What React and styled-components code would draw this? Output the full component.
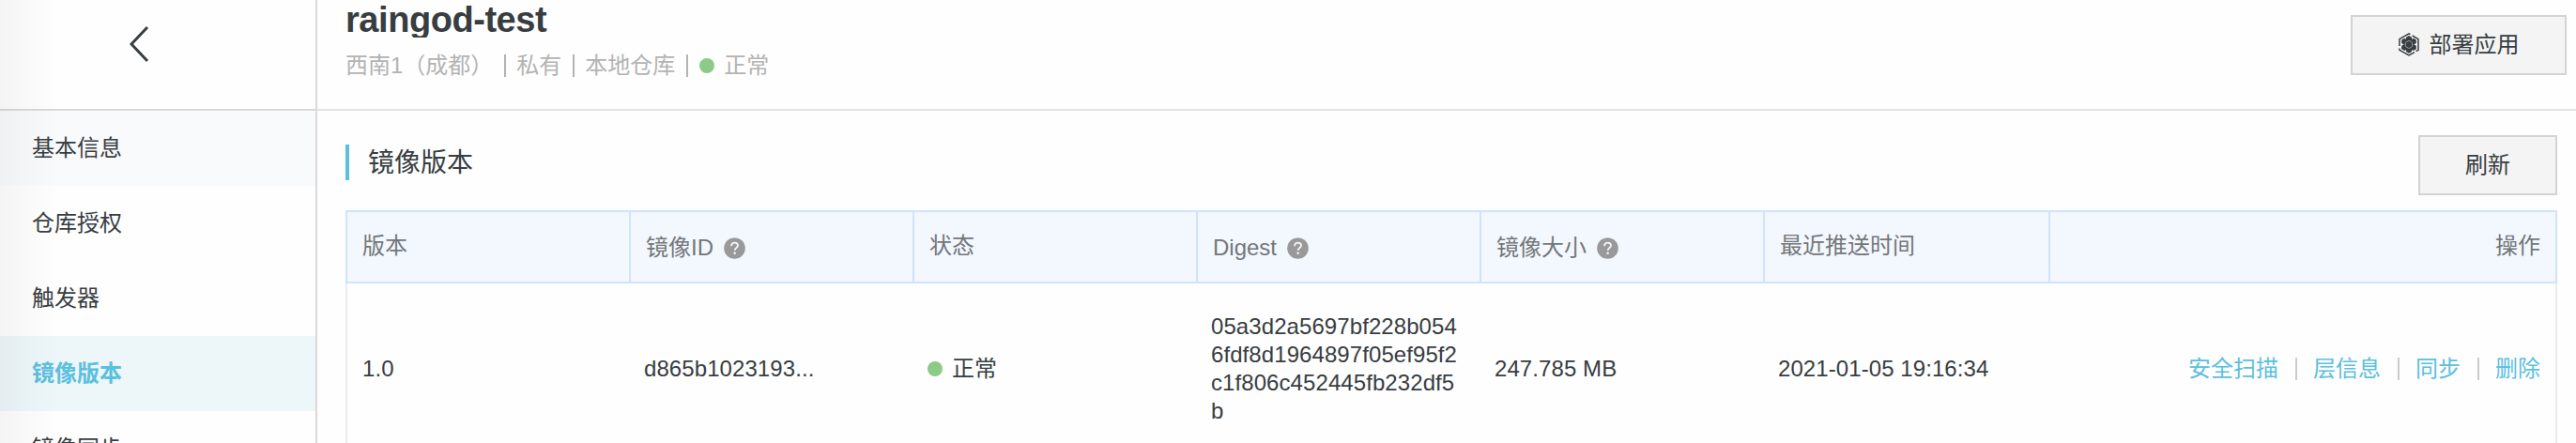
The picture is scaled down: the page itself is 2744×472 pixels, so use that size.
import React from "react";
import styled, { createGlobalStyle } from "styled-components";

const Global = createGlobalStyle`
  * { box-sizing: border-box; }
  body {
    margin: 0;
    background: #fefefe;
    color: #373d41;
    font-family: "Liberation Sans", "Noto Sans CJK SC", sans-serif;
    font-size: 24px;
    line-height: 30px;
    overflow: hidden;
  }
`;

const Page = styled.div`
  display: flex;
  height: 472px;
  overflow: hidden;
`;

const Sidebar = styled.nav`
  position: relative;
  flex: 0 0 338px;
  height: 472px;
  overflow: hidden;
  border-right: 2px solid #d9d9d9;
  &::after {
    content: "";
    position: absolute;
    inset: 0 auto 0 0;
    width: 64px;
    pointer-events: none;
    background: linear-gradient(90deg, rgba(0, 0, 0, 0.04), rgba(0, 0, 0, 0.02) 45%, rgba(0, 0, 0, 0));
  }
`;

const BackBar = styled.div`
  height: 118px;
  padding: 27px 0 0 138px;
  border-bottom: 2px solid #d9d9d9;
  svg { display: block; }
`;

const NavItem = styled.a`
  display: flex;
  align-items: center;
  height: 80px;
  padding: 0 34px;
  background: ${(p) => (p.$active ? "#edf6f9" : p.$shaded ? "#f9fafc" : "transparent")};
  color: ${(p) => (p.$active ? "#5bc0de" : "#373d41")};
  font-weight: ${(p) => (p.$active ? 700 : 400)};
`;

const Main = styled.main`
  flex: 1;
  min-width: 0;
`;

const Header = styled.header`
  display: flex;
  justify-content: space-between;
  height: 118px;
  padding: 0 10px 0 30px;
  border-bottom: 2px solid #e3e3e3;
`;

const Title = styled.h1`
  height: 40px;
  margin: 0;
  overflow: hidden;
  font-size: 38px;
  line-height: 42px;
  letter-spacing: -0.45px;
  font-weight: 700;
`;

const Meta = styled.div`
  display: flex;
  align-items: center;
  height: 30px;
  margin-top: 15px;
  color: #b3b3b3;
  white-space: pre;
`;

const Dot = styled.i`
  flex: none;
  width: 16px;
  height: 16px;
  margin-right: ${(p) => p.$gap}px;
  border-radius: 50%;
  background: #8ccb87;
`;

const Bar = styled.i`
  flex: none;
  width: 2px;
  height: 24px;
  margin: ${(p) => p.$margin};
  background: ${(p) => p.$color};
`;

const Button = styled.button`
  display: flex;
  align-items: center;
  justify-content: center;
  gap: 11px;
  width: ${(p) => p.$width}px;
  height: 64px;
  margin: ${(p) => p.$top}px 0 0;
  padding: 0 0 1px;
  border: 2px solid #d3d3d3;
  background: #f4f4f4;
  color: #373d41;
  font: inherit;
`;

const Section = styled.section`
  padding: 0 20px 0 30px;
`;

const SectionHead = styled.div`
  display: flex;
  justify-content: space-between;
  height: 106px;
`;

const SectionTitle = styled.h2`
  height: 38px;
  margin: 36px 0 0;
  padding-left: 20px;
  border-left: 4px solid #5bc0de;
  font-size: 28px;
  line-height: 40px;
  font-weight: 400;
`;

const columns = "302px 302px 302px 302px 302px 304px 1fr";

const TableHead = styled.div`
  display: grid;
  grid-template-columns: ${columns};
  height: 78px;
  border: solid #d0e3fc;
  border-width: 2px 2px 2px 0;
  background: #f3f7fe;
  color: #73777a;
`;

const HeadCell = styled.div`
  display: flex;
  align-items: center;
  justify-content: ${(p) => (p.$end ? "flex-end" : "flex-start")};
  gap: 11px;
  padding: ${(p) => (p.$help ? "2px" : "0")} 16px ${(p) => (p.$help ? "0" : "2px")};
  border-left: 2px solid #d0e3fc;
`;

const TableRow = styled.div`
  display: grid;
  grid-template-columns: ${columns};
  height: 184px;
  border: solid #ebebeb;
  border-width: 0 2px;
`;

const Cell = styled.div`
  display: flex;
  align-items: center;
  justify-content: ${(p) => (p.$end ? "flex-end" : "flex-start")};
  padding: 0 ${(p) => (p.$end ? 16 : 20)}px 3px 14px;
  letter-spacing: ${(p) => (p.$end ? 0 : 0.08)}px;
  &:first-child { padding-left: 16px; }
`;

const Digest = styled.span`
  width: 265px;
  word-break: break-all;
`;

const Link = styled.a`
  color: #5bc0de;
`;

const HelpIcon = () => (
  <svg width="23" height="23" viewBox="0 0 23 23">
    <circle cx="11.5" cy="11.5" r="11.3" fill="#999" />
    <path d="M8.1 9.2C8.1 6.9 9.6 5.6 11.6 5.6s3.4 1.2 3.4 3c0 2.5-3.3 2.5-3.3 5.1" fill="none" stroke="#f3f7fe" strokeWidth="1.8" />
    <circle cx="11.7" cy="16.8" r="1.25" fill="#f3f7fe" />
  </svg>
);

const hex = (cx, cy, r) =>
  [0, 1, 2, 3, 4, 5]
    .map((i) => {
      const a = ((60 * i - 90) * Math.PI) / 180;
      return `${(cx + r * Math.cos(a)).toFixed(2)},${(cy + r * Math.sin(a)).toFixed(2)}`;
    })
    .join(" ");

const cells = [[11, 6.5], [6.2, 9.3], [15.8, 9.3], [6.2, 15.4], [15.8, 15.4], [11, 18.3]];

const ClusterIcon = () => (
  <svg width="22" height="25" viewBox="0 0 22 25">
    <path
      d="M12.5 1.6 11 .9 1 6.6V14M1 16.4v1.9L11 24l6-3.4M18.6 19.6l2.4-1.3V6.6L14.6 3"
      fill="none"
      stroke="#373d41"
      strokeWidth="1.5"
    />
    {cells.map(([x, y]) => (
      <polygon key={`${x}-${y}`} points={hex(x, y, 3.5)} fill="#373d41" />
    ))}
    <polygon points={hex(11, 12.4, 4.2)} fill="#373d41" stroke="#a5a8aa" strokeWidth="0.8" />
  </svg>
);

const navItems = ["基本信息", "仓库授权", "触发器", "镜像版本", "镜像同步"];

const headings = [
  { label: "版本" },
  { label: "镜像ID", help: true },
  { label: "状态" },
  { label: "Digest", help: true },
  { label: "镜像大小", help: true },
  { label: "最近推送时间" },
  { label: "操作", end: true },
];

const actions = ["安全扫描", "层信息", "同步", "删除"];

export default function App() {
  return (
    <Page>
      <Global />
      <Sidebar>
        <BackBar>
          <svg width="22" height="40" viewBox="0 0 22 40">
            <path d="M19 2 2 20 19 38" fill="none" stroke="#373d41" strokeWidth="3" />
          </svg>
        </BackBar>
        {navItems.map((name, i) => (
          <NavItem key={name} $active={i === 3} $shaded={i === 0}>{name}</NavItem>
        ))}
      </Sidebar>
      <Main>
        <Header>
          <div>
            <Title>raingod-test</Title>
            <Meta>
              西南1（成都）
              <Bar $margin="0 11px 0 12px" $color="#b3b3b3" />
              私有
              <Bar $margin="0 11px 0 12px" $color="#b3b3b3" />
              本地仓库
              <Bar $margin="0 12px" $color="#b3b3b3" />
              <Dot $gap={10} />
              正常
            </Meta>
          </div>
          <Button $width={230} $top={16}>
            <ClusterIcon />
            部署应用
          </Button>
        </Header>
        <Section>
          <SectionHead>
            <SectionTitle>镜像版本</SectionTitle>
            <Button $width={148} $top={26}>刷新</Button>
          </SectionHead>
          <TableHead>
            {headings.map(({ label, help, end }) => (
              <HeadCell key={label} $help={help} $end={end}>
                {label}
                {help && <HelpIcon />}
              </HeadCell>
            ))}
          </TableHead>
          <TableRow>
            <Cell>1.0</Cell>
            <Cell>d865b1023193...</Cell>
            <Cell><Dot $gap={10} />正常</Cell>
            <Cell><Digest>05a3d2a5697bf228b0546fdf8d1964897f05ef95f2c1f806c452445fb232df5b</Digest></Cell>
            <Cell>247.785 MB</Cell>
            <Cell>2021-01-05 19:16:34</Cell>
            <Cell $end>
              {actions.map((name, i) => (
                <React.Fragment key={name}>
                  {i > 0 && <Bar $margin="0 17px 0 18px" $color="#ccc" />}
                  <Link>{name}</Link>
                </React.Fragment>
              ))}
            </Cell>
          </TableRow>
        </Section>
      </Main>
    </Page>
  );
}
